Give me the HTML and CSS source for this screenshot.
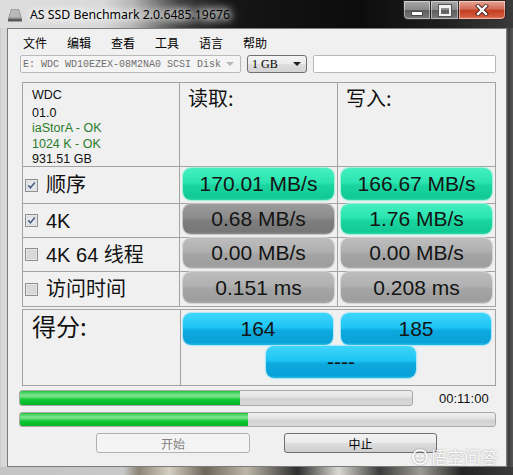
FILE: index.html
```html
<!DOCTYPE html>
<html>
<head>
<meta charset="utf-8">
<link rel="stylesheet" href="styles.css">
</head>
<body>
<div class="window">
  <div class="titlebar">
    <svg class="appicon" width="16" height="14" viewBox="0 0 16 14">
      <path d="M4 1 L12 1 L15 11 L1 11 Z" fill="#8c8c8c"/>
      <path d="M4.5 1.5 L11.5 1.5 L13.8 9.5 L2.2 9.5 Z" fill="#b9b9b9"/>
      <rect x="1" y="11" width="14" height="2.5" fill="#5a5a5a"/>
    </svg>
    <span class="title">AS SSD Benchmark 2.0.6485.19676</span>
    <div class="caption">
      <div class="cbtn min"><span class="g-min"></span></div>
      <div class="cbtn max"><span class="g-max"></span></div>
      <div class="cbtn close">
        <svg width="14" height="12" viewBox="0 0 14 12">
          <path d="M3 2 L11 10 M11 2 L3 10" stroke="#3a1a14" stroke-width="4" stroke-linecap="square"/>
          <path d="M3 2 L11 10 M11 2 L3 10" stroke="#ffffff" stroke-width="2.4" stroke-linecap="square"/>
        </svg>
      </div>
    </div>
  </div>

  <div class="client">
    <div class="menubar">
      <span>文件</span><span>编辑</span><span>查看</span><span>工具</span><span>语言</span><span>帮助</span>
    </div>

    <div class="toolbar">
      <div class="combo drive">
        <span class="drive-text">E: WDC WD10EZEX-08M2NA0 SCSI Disk</span>
        <span class="arrow dis"></span>
      </div>
      <div class="combo size">
        <span class="size-text">1 GB</span>
        <span class="arrow"></span>
      </div>
      <div class="field"></div>
    </div>

    <div class="results">
      <div class="cell info">
        <div class="info-l first">WDC</div>
        <div class="info-l">01.0</div>
        <div class="info-l ok">iaStorA - OK</div>
        <div class="info-l ok">1024 K - OK</div>
        <div class="info-l">931.51 GB</div>
      </div>
      <div class="cell head">读取:</div>
      <div class="cell head">写入:</div>

      <div class="cell label">
        <svg class="chk" width="13" height="13" viewBox="0 0 13 13"><rect x="0.5" y="0.5" width="12" height="12" fill="#f4f4f4" stroke="#8e8f8f"/><rect x="2" y="2" width="9" height="9" fill="#e6e8ec" stroke="#c4c7cc" stroke-width="0.6"/><path d="M3.3 6.4 L5.5 8.8 L9.8 3.6" stroke="#4b5f86" stroke-width="1.6" fill="none"/></svg>
        <span>顺序</span>
      </div>
      <div class="cell val"><div class="pill green">170.01 MB/s</div></div>
      <div class="cell val"><div class="pill green">166.67 MB/s</div></div>

      <div class="cell label">
        <svg class="chk" width="13" height="13" viewBox="0 0 13 13"><rect x="0.5" y="0.5" width="12" height="12" fill="#f4f4f4" stroke="#8e8f8f"/><rect x="2" y="2" width="9" height="9" fill="#e6e8ec" stroke="#c4c7cc" stroke-width="0.6"/><path d="M3.3 6.4 L5.5 8.8 L9.8 3.6" stroke="#4b5f86" stroke-width="1.6" fill="none"/></svg>
        <span>4K</span>
      </div>
      <div class="cell val"><div class="pill dark">0.68 MB/s</div></div>
      <div class="cell val"><div class="pill green">1.76 MB/s</div></div>

      <div class="cell label">
        <svg class="chk" width="13" height="13" viewBox="0 0 13 13"><rect x="0.5" y="0.5" width="12" height="12" fill="#f4f4f4" stroke="#8e8f8f"/><rect x="2" y="2" width="9" height="9" fill="#d9d9d9" stroke="#c8c8c8" stroke-width="0.6"/></svg>
        <span>4K 64 线程</span>
      </div>
      <div class="cell val"><div class="pill grey">0.00 MB/s</div></div>
      <div class="cell val"><div class="pill grey">0.00 MB/s</div></div>

      <div class="cell label">
        <svg class="chk" width="13" height="13" viewBox="0 0 13 13"><rect x="0.5" y="0.5" width="12" height="12" fill="#f4f4f4" stroke="#8e8f8f"/><rect x="2" y="2" width="9" height="9" fill="#d9d9d9" stroke="#c8c8c8" stroke-width="0.6"/></svg>
        <span>访问时间</span>
      </div>
      <div class="cell val"><div class="pill grey">0.151 ms</div></div>
      <div class="cell val"><div class="pill grey">0.208 ms</div></div>
    </div>

    <div class="scores">
      <div class="cell score-label">得分:</div>
      <div class="cell score-vals">
        <div class="pill blue">164</div>
        <div class="pill blue">185</div>
        <div class="pill blue total">----</div>
      </div>
    </div>

    <div class="prog-row">
      <div class="bar bar1"><div class="fill" style="width:220px"></div></div>
      <span class="time">00:11:00</span>
    </div>
    <div class="bar bar2"><div class="fill" style="width:228px"></div></div>

    <div class="buttons">
      <div class="btn disabled">开始</div>
      <div class="btn">中止</div>
    </div>
  </div>
  <div class="bottomframe"></div>

  <div class="watermark">
    <svg width="16" height="16" viewBox="0 0 16 16"><circle cx="8" cy="8" r="7" fill="none" stroke="#fff" stroke-width="1.6"/><circle cx="5.5" cy="7" r="1.3" fill="#fff"/><circle cx="10.5" cy="7" r="1.3" fill="#fff"/><path d="M4.5 10.5 Q8 13 11.5 10.5" stroke="#fff" stroke-width="1.4" fill="none"/></svg>
    <span>悟空问答</span>
  </div>
</div>
</body>
</html>
```

FILE: styles.css
```css
html, body {
  margin: 0;
  padding: 0;
}
body {
  width: 513px;
  height: 475px;
  overflow: hidden;
  font-family: "Liberation Sans", "Noto Sans CJK SC", sans-serif;
}
.window {
  position: relative;
  width: 513px;
  height: 475px;
  box-sizing: border-box;
  background: linear-gradient(90deg, #bdbdbd 0, #d8d8d8 1px, #d2d2d2 50%, #cfcfcf 98.5%, #3a3a3a 99%, #555 100%);
  display: flex;
  flex-direction: column;
}
.titlebar {
  height: 28px;
  flex: none;
  display: flex;
  align-items: flex-start;
  background: linear-gradient(90deg, #dedede 0%, #d9d9d9 20%, #b4b4b4 26%, #3a3a3a 35%, #161616 44%, #0c0c0c 70%, #1c1c1c 85%, #3a3a3a 100%);
}
.appicon {
  margin: 8px 0 0 7px;
  flex: none;
}
.title {
  margin: 6px 0 0 7px;
  font-family: "Noto Sans", "Liberation Sans", sans-serif;
  font-size: 12.3px;
  line-height: 17px;
  color: #000;
  white-space: nowrap;
  text-shadow: 0 0 6px #fff, 0 0 9px #fff, 0 0 13px rgba(255,255,255,0.9), 0 0 16px rgba(255,255,255,0.7);
}
.caption {
  margin-left: auto;
  margin-right: 7px;
  display: flex;
  height: 20px;
  flex: none;
}
.cbtn {
  height: 20px;
  box-sizing: border-box;
  border: 1px solid rgba(20,20,20,0.85);
  box-shadow: inset 0 0 0 1px rgba(255,255,255,0.45);
  display: flex;
  align-items: center;
  justify-content: center;
}
.cbtn.min {
  width: 27px;
  border-bottom-left-radius: 5px;
  border-right: none;
  background: linear-gradient(#a9a9a9, #8a8a8a 48%, #5e5e5e 52%, #7a7a7a);
}
.cbtn.max {
  width: 28px;
  border-right: none;
  background: linear-gradient(#a9a9a9, #8a8a8a 48%, #5e5e5e 52%, #7a7a7a);
}
.cbtn.close {
  width: 48px;
  border-bottom-right-radius: 5px;
  background: linear-gradient(#e7a595, #d26a56 45%, #c33f22 52%, #d3573c 85%, #e1866a);
}
.g-min {
  width: 10px;
  height: 3px;
  background: #fff;
  border: 1px solid #4a4a4a;
  margin-top: 6px;
}
.g-max {
  width: 8px;
  height: 6px;
  border: 2px solid #f2f2f2;
  border-top-width: 3px;
  outline: 1px solid #555;
}

.client {
  width: 500px;
  height: 439px;
  margin-left: 7px;
  box-sizing: border-box;
  border: 1px solid #7c7c7c;
  background: #f0f0f0;
  flex: none;
  display: flex;
  flex-direction: column;
}
.bottomframe {
  flex: 1;
  background: linear-gradient(90deg, #c4c4c4 0%, #c8c8c8 24%, #8d8577 27%, #d4cfc2 33%, #6f665a 40%, #bdb6a8 48%, #2e2e2e 58%, #dad8d2 66%, #3c3c3c 74%, #9c9a94 82%, #252525 90%, #3a3a3a 100%);
}

.menubar {
  height: 26px;
  box-sizing: border-box;
  padding: 6px 0 0 15px;
  display: flex;
  gap: 20px;
  font-family: "Noto Sans CJK SC", sans-serif;
  font-size: 12px;
  line-height: 16px;
  color: #000;
}

.toolbar {
  height: 18px;
  padding-left: 12px;
  display: flex;
  gap: 6px;
}
.combo {
  height: 18px;
  box-sizing: border-box;
  display: flex;
  align-items: center;
  position: relative;
}
.combo.drive {
  width: 221px;
  border: 1px solid #b9b9b9;
  background: #f4f4f4;
  border-radius: 2px;
  padding-left: 2px;
}
.drive-text {
  font-family: "Liberation Mono", monospace;
  font-size: 10px;
  color: #6f6f6f;
  white-space: nowrap;
}
.combo.size {
  width: 60px;
  border: 1px solid #707070;
  border-radius: 3px;
  background: linear-gradient(#f4f4f4, #ebebeb 50%, #dedede 51%, #d4d4d4);
  padding-left: 4px;
}
.size-text {
  font-family: "Liberation Serif", serif;
  font-size: 12px;
  color: #000;
}
.arrow {
  margin-left: auto;
  margin-right: 5px;
  width: 0;
  height: 0;
  border-left: 4px solid transparent;
  border-right: 4px solid transparent;
  border-top: 4px solid #1e1e1e;
}
.arrow.dis {
  margin-right: 6px;
  border-top-color: #b4b4b4;
}
.field {
  width: 183px;
  height: 18px;
  box-sizing: border-box;
  border: 1px solid #b5b8bd;
  border-radius: 2px;
  background: #fff;
}

.results {
  margin: 9px 0 0 14px;
  width: 474px;
  box-sizing: border-box;
  border: 1px solid #a3a3a3;
  background: #a3a3a3;
  display: grid;
  grid-template-columns: 156px 157px 157px;
  grid-template-rows: 83px 36px 33px 33px 34px;
  gap: 1px;
}
.cell {
  background: #f0f0f0;
  box-sizing: border-box;
}
.info {
  padding: 5px 0 0 9px;
  font-size: 12.5px;
  color: #111;
}
.info-l {
  line-height: 15.5px;
  white-space: nowrap;
}
.info-l.first {
  margin-bottom: 2px;
}
.info-l.ok {
  color: #2b7c2b;
}
.head {
  padding: 3px 0 0 8px;
  font-family: "Noto Sans CJK SC", sans-serif;
  font-size: 20px;
  line-height: 24px;
  color: #111;
}
.label {
  display: flex;
  align-items: center;
  padding-left: 2px;
  gap: 8px;
  font-size: 20px;
  color: #111;
}
.label span {
  line-height: 24px;
  white-space: nowrap;
}
.chk {
  flex: none;
}
.val {
  padding: 1px 3px 3px 3px;
  display: flex;
}
.results .cell:nth-child(n+7).val {
  padding-top: 0;
}
.pill {
  flex: 1;
  border-radius: 8px;
  display: flex;
  align-items: center;
  justify-content: center;
  font-size: 21px;
  color: #141414;
  white-space: nowrap;
}
.pill.green {
  background: linear-gradient(#44efc0 0%, #2be4b0 45%, #1ad5a0 55%, #12c994 92%, #2ad8a6 100%);
  box-shadow: 0 0 1px 1px #9af2d8;
}
.pill.dark {
  background: linear-gradient(#9c9c9c 0%, #8c8c8c 45%, #7e7e7e 55%, #777 92%, #8a8a8a 100%);
  box-shadow: 0 0 1px 1px #c4c4c4;
}
.pill.grey {
  background: linear-gradient(#bdbdbd 0%, #b0b0b0 45%, #a4a4a4 55%, #9e9e9e 92%, #ababab 100%);
  box-shadow: 0 0 1px 1px #d2d2d2;
}
.pill.blue {
  background: linear-gradient(#3fd6fb 0%, #1ec5f4 45%, #0ca9de 55%, #0aa2d8 92%, #22b8e8 100%);
  box-shadow: 0 0 1px 1px #a6e6fa;
}

.scores {
  margin: 2px 0 0 14px;
  width: 474px;
  height: 77px;
  box-sizing: border-box;
  border: 1px solid #a3a3a3;
  background: #a3a3a3;
  display: grid;
  grid-template-columns: 157px 314px;
  gap: 1px;
}
.score-label {
  padding: 2px 0 0 9px;
  font-family: "Noto Sans CJK SC", sans-serif;
  font-size: 24px;
  line-height: 28px;
  color: #111;
}
.score-vals {
  padding: 3px 0 0 2px;
  display: grid;
  grid-template-columns: 150px 150px;
  grid-template-rows: 32px 32px;
  column-gap: 8px;
  row-gap: 1px;
  align-content: start;
}
.pill.total {
  grid-column: 1 / span 2;
  width: 150px;
  margin-left: 83px;
}

.prog-row {
  margin: 4px 0 0 11px;
  display: flex;
  align-items: center;
  height: 16px;
}
.bar {
  box-sizing: border-box;
  border: 1px solid #a9a9a9;
  border-radius: 3px;
  background: linear-gradient(#efefef, #e2e2e2 45%, #d1d1d1 55%, #dadada);
  overflow: hidden;
  display: flex;
}
.bar1 {
  width: 394px;
  height: 16px;
}
.bar2 {
  width: 477px;
  height: 15px;
  margin: 6px 0 0 11px;
}
.fill {
  height: 100%;
  background: linear-gradient(#20c43e 0%, #7fe68f 30%, #5fdc72 45%, #0ec832 62%, #05b526 100%);
}
.time {
  margin-left: 26px;
  font-size: 13px;
  color: #111;
}

.buttons {
  margin: 6px 0 0 88px;
  display: flex;
  gap: 34px;
}
.btn {
  width: 154px;
  height: 20px;
  box-sizing: border-box;
  border: 1px solid #707070;
  border-radius: 3px;
  background: linear-gradient(#f3f3f3, #ebebeb 48%, #dddddd 52%, #cfcfcf);
  display: flex;
  align-items: center;
  justify-content: center;
  font-family: "Noto Sans CJK SC", sans-serif;
  font-size: 12px;
  color: #000;
}
.btn + .btn {
  width: 153px;
}
.btn.disabled {
  border-color: #adb2b5;
  background: #f4f4f4;
  color: #838383;
}

.watermark {
  position: absolute;
  left: 412px;
  top: 447px;
  display: flex;
  align-items: center;
  gap: 2px;
  font-family: "Noto Sans CJK SC", sans-serif;
  font-size: 17px;
  line-height: 20px;
  color: rgba(255,255,255,0.92);
  text-shadow: 0 0 2px rgba(0,0,0,0.35);
}
.watermark svg {
  filter: drop-shadow(0 0 1px rgba(0,0,0,0.35));
}
```
